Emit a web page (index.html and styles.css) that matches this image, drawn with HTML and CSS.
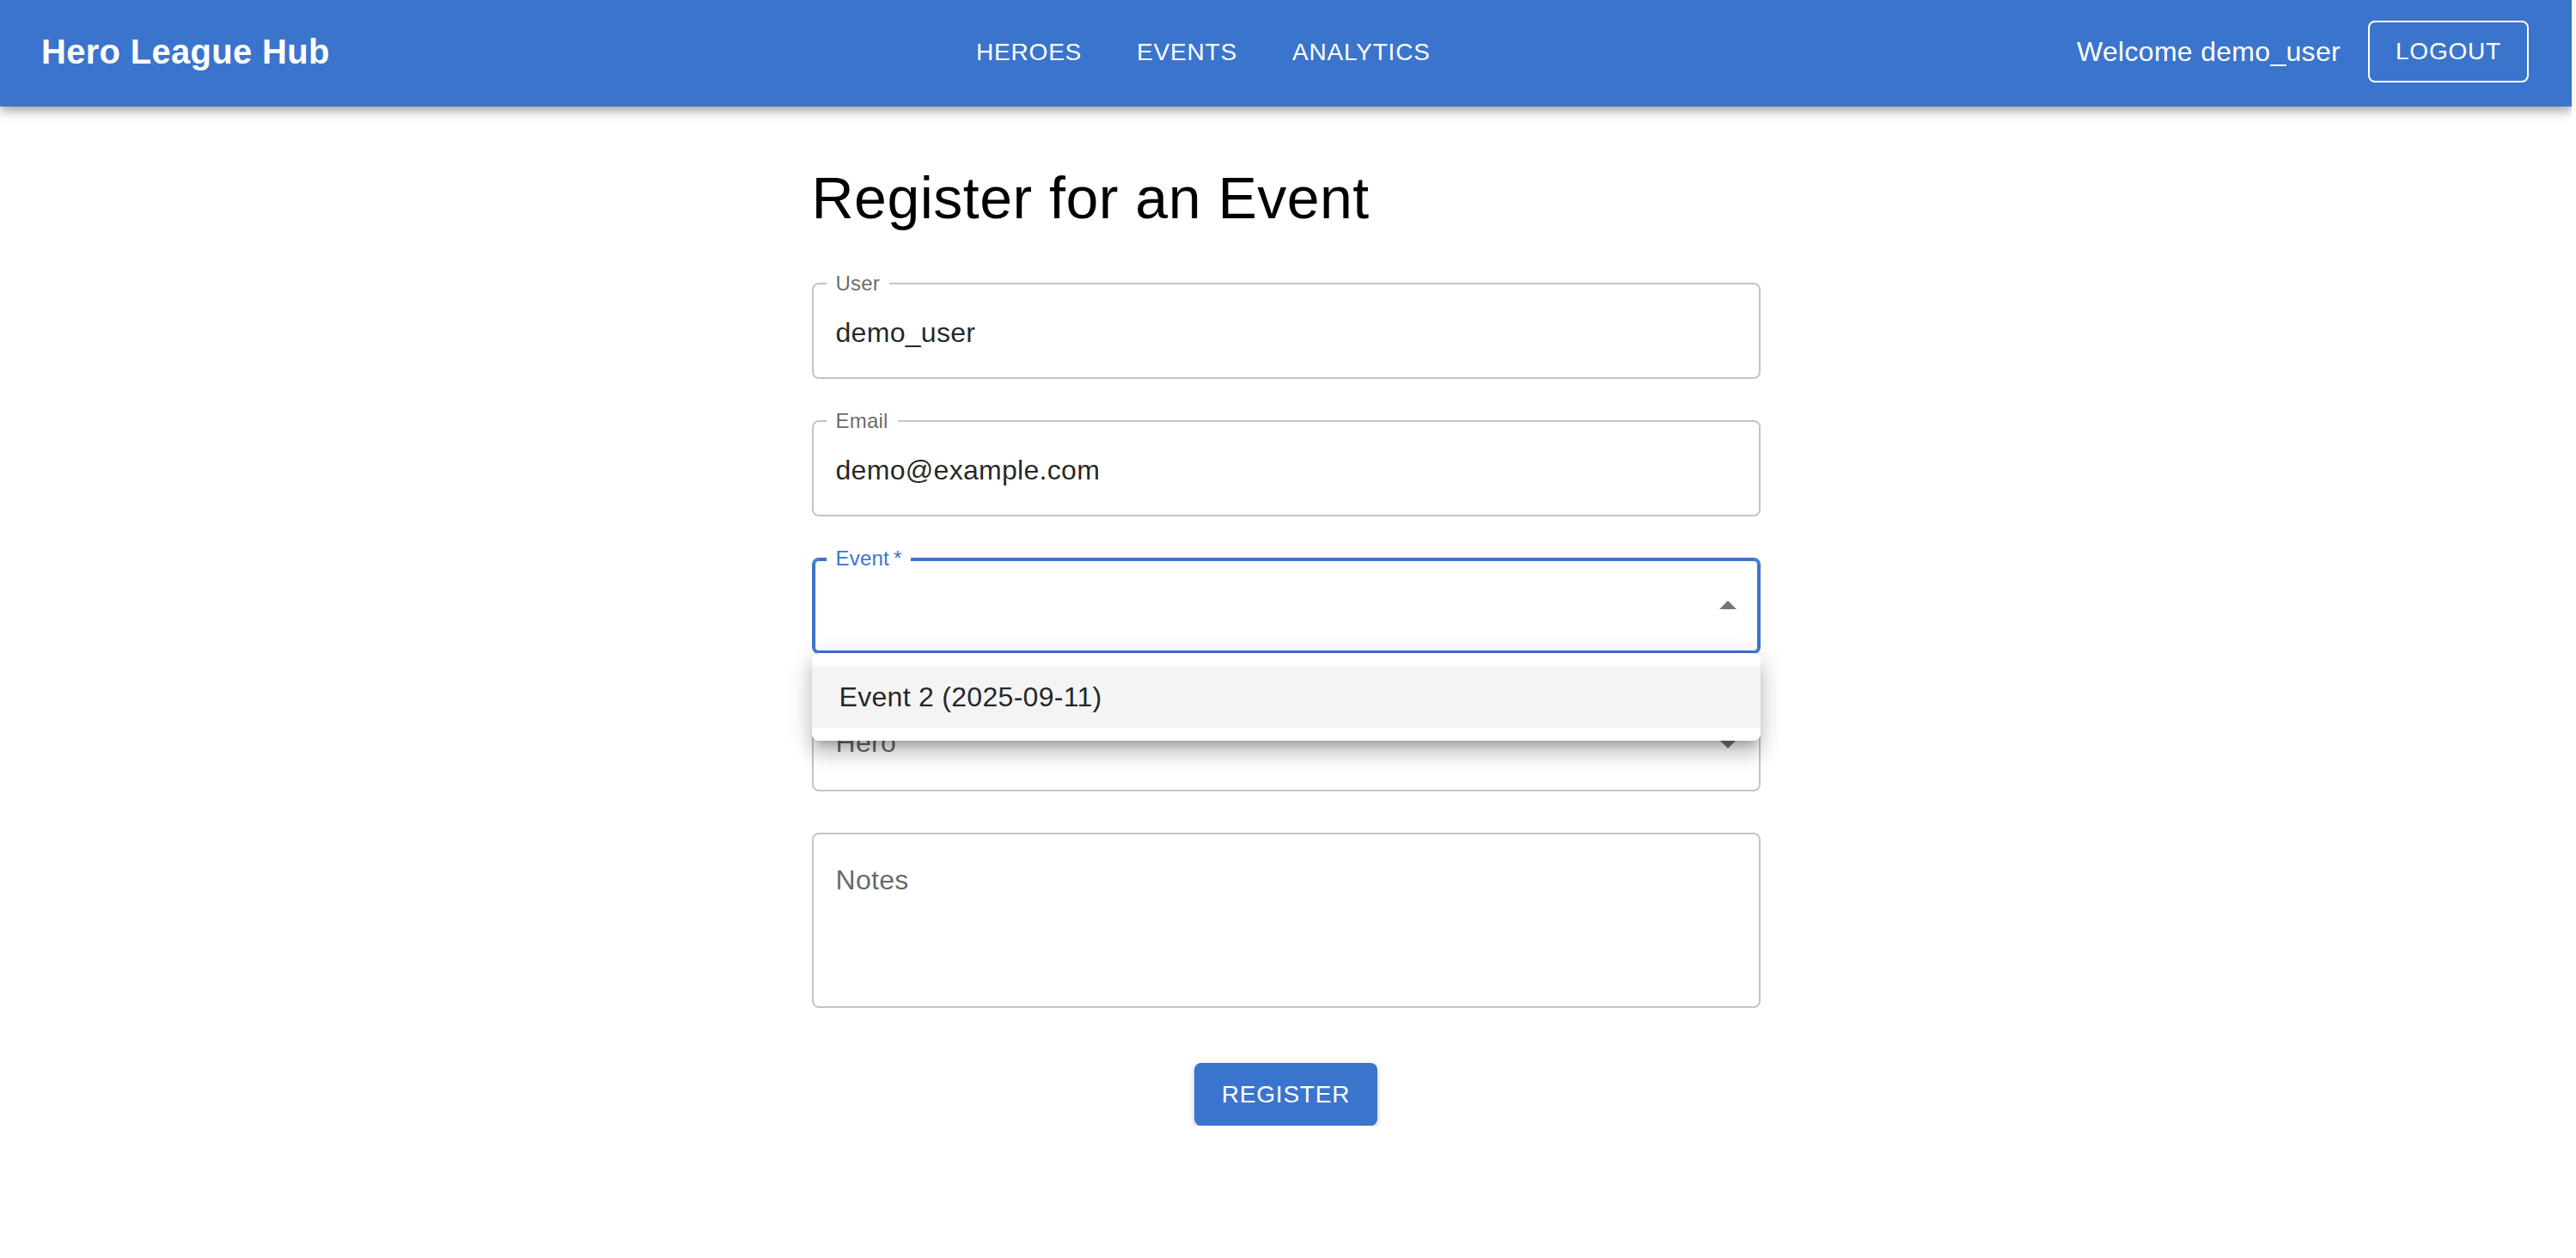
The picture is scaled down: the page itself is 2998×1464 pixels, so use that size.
FILE: index.html
```html
<!DOCTYPE html>
<html lang="en">
<head>
<meta charset="utf-8">
<title>Hero League Hub</title>
<link rel="stylesheet" href="styles.css">
</head>
<body>
<header class="appbar">
  <div class="toolbar">
    <div class="brand">Hero League Hub</div>
    <nav class="nav">
      <a class="nav-btn" href="#">HEROES</a>
      <a class="nav-btn" href="#">EVENTS</a>
      <a class="nav-btn" href="#">ANALYTICS</a>
    </nav>
    <div class="user-area">
      <span class="welcome">Welcome demo_user</span>
      <button class="btn-outline" type="button">LOGOUT</button>
    </div>
  </div>
</header>

<main class="container">
  <h1 class="page-title">Register for an Event</h1>
  <form class="form">
    <div class="field">
      <span class="field-label">User</span>
      <div class="field-value">demo_user</div>
    </div>
    <div class="field">
      <span class="field-label">Email</span>
      <div class="field-value">demo@example.com</div>
    </div>
    <div class="field field-focused">
      <span class="field-label label-focused">Event<span class="req">&thinsp;*</span></span>
      <div class="field-value"></div>
      <svg class="select-icon icon-open" viewBox="0 0 24 24" aria-hidden="true"><path d="M7 10l5 5 5-5z"/></svg>
      <div class="menu-paper">
        <div class="menu-item">Event 2 (2025-09-11)</div>
      </div>
    </div>
    <div class="field">
      <div class="field-placeholder">Hero</div>
      <svg class="select-icon" viewBox="0 0 24 24" aria-hidden="true"><path d="M7 10l5 5 5-5z"/></svg>
    </div>
    <div class="field field-multi">
      <div class="field-placeholder">Notes</div>
    </div>
    <div class="actions">
      <button class="btn-contained" type="button">REGISTER</button>
    </div>
  </form>
</main>
</body>
</html>
```
FILE: styles.css
```css
* {
  box-sizing: border-box;
}

html {
  margin: 0;
  padding: 0;
  background: #ffffff;
}

body {
  margin: 0 5px 0 0;
  padding: 0;
  background: #ffffff;
  font-family: "Liberation Sans", Arial, Helvetica, sans-serif;
  color: #000;
}

/* ---------- App bar ---------- */
.appbar {
  background: #3b74cc;
  color: #fff;
  height: 124px;
  box-shadow: 0 4px 8px -2px rgba(0,0,0,0.2),
              0 8px 10px 0 rgba(0,0,0,0.14),
              0 2px 20px 0 rgba(0,0,0,0.12);
  position: relative;
  z-index: 2;
}

.toolbar {
  height: 100%;
  display: flex;
  align-items: center;
  padding: 0 50px 4px 48px;
}

.brand {
  font-size: 40px;
  font-weight: 700;
  letter-spacing: 0.3px;
  white-space: nowrap;
}

.nav {
  flex: 1;
  display: flex;
  justify-content: center;
  gap: 32px;
}

.nav-btn {
  color: #fff;
  text-decoration: none;
  font-size: 28px;
  letter-spacing: 0.8px;
  line-height: 49px;
  padding: 12px 16px;
  border-radius: 8px;
}

.user-area {
  display: flex;
  align-items: center;
}

.welcome {
  font-size: 32px;
  line-height: 48px;
  letter-spacing: 0.3px;
  margin-right: 32px;
  white-space: nowrap;
}

.btn-outline {
  font-family: inherit;
  font-size: 28px;
  letter-spacing: 0.8px;
  color: #fff;
  background: transparent;
  border: 2px solid #fff;
  border-radius: 8px;
  height: 72px;
  padding: 0 30px;
  cursor: pointer;
}

/* ---------- Main ---------- */
.container {
  width: 1200px;
  margin: 0 auto;
  padding: 64px 48px 0;
}

.page-title {
  font-size: 68px;
  font-weight: 400;
  line-height: 84px;
  letter-spacing: 0.5px;
  margin: 0 0 57px;
  color: #000;
}

.form {
  display: flex;
  flex-direction: column;
}

.field {
  position: relative;
  height: 112px;
  border: 2px solid rgba(0,0,0,0.23);
  border-radius: 8px;
  padding: 33px 26px;
  margin-bottom: 48px;
  font-size: 32px;
  line-height: 46px;
  letter-spacing: 0.3px;
}

.field-focused {
  border-color: #3b74cc;
  box-shadow: inset 0 0 0 2px #3b74cc;
}

.field-multi {
  height: 204px;
  margin-bottom: 64px;
}

.field-label {
  position: absolute;
  top: -13px;
  left: 15px;
  padding: 0 11px;
  background: #fff;
  font-size: 24px;
  line-height: 24px;
  letter-spacing: 0.2px;
  color: rgba(0,0,0,0.6);
  white-space: nowrap;
}

.label-focused {
  color: #3b74cc;
}

.field-value {
  color: rgba(0,0,0,0.87);
  height: 46px;
  white-space: nowrap;
}

.field-placeholder {
  color: rgba(0,0,0,0.6);
  margin-top: -3px;
}

.select-icon {
  position: absolute;
  right: 12px;
  top: 50%;
  width: 48px;
  height: 48px;
  margin-top: -24px;
  fill: rgba(0,0,0,0.54);
}

.icon-open {
  transform: rotate(180deg);
}

/* ---------- Menu popover ---------- */
.menu-paper {
  position: absolute;
  top: calc(100% + 1px);
  left: -2px;
  right: -2px;
  background: #fff;
  border-radius: 8px;
  padding: 15px 0;
  z-index: 5;
  box-shadow: 0 10px 10px -6px rgba(0,0,0,0.2),
              0 16px 20px 2px rgba(0,0,0,0.14),
              0 6px 28px 4px rgba(0,0,0,0.12);
}

.menu-item {
  background: #f4f4f4;
  padding: 12px 32px;
  font-size: 32px;
  line-height: 48px;
  letter-spacing: 0.3px;
  color: rgba(0,0,0,0.87);
  white-space: nowrap;
}

/* ---------- Actions ---------- */
.actions {
  display: flex;
  justify-content: center;
}

.btn-contained {
  font-family: inherit;
  font-size: 28px;
  letter-spacing: 0.8px;
  color: #fff;
  background: #3b74cc;
  border: 0;
  border-radius: 8px;
  height: 73px;
  padding: 0 32px;
  cursor: pointer;
  box-shadow: 0 6px 2px -4px rgba(0,0,0,0.2),
              0 4px 4px 0 rgba(0,0,0,0.14),
              0 2px 10px 0 rgba(0,0,0,0.12);
}
```
